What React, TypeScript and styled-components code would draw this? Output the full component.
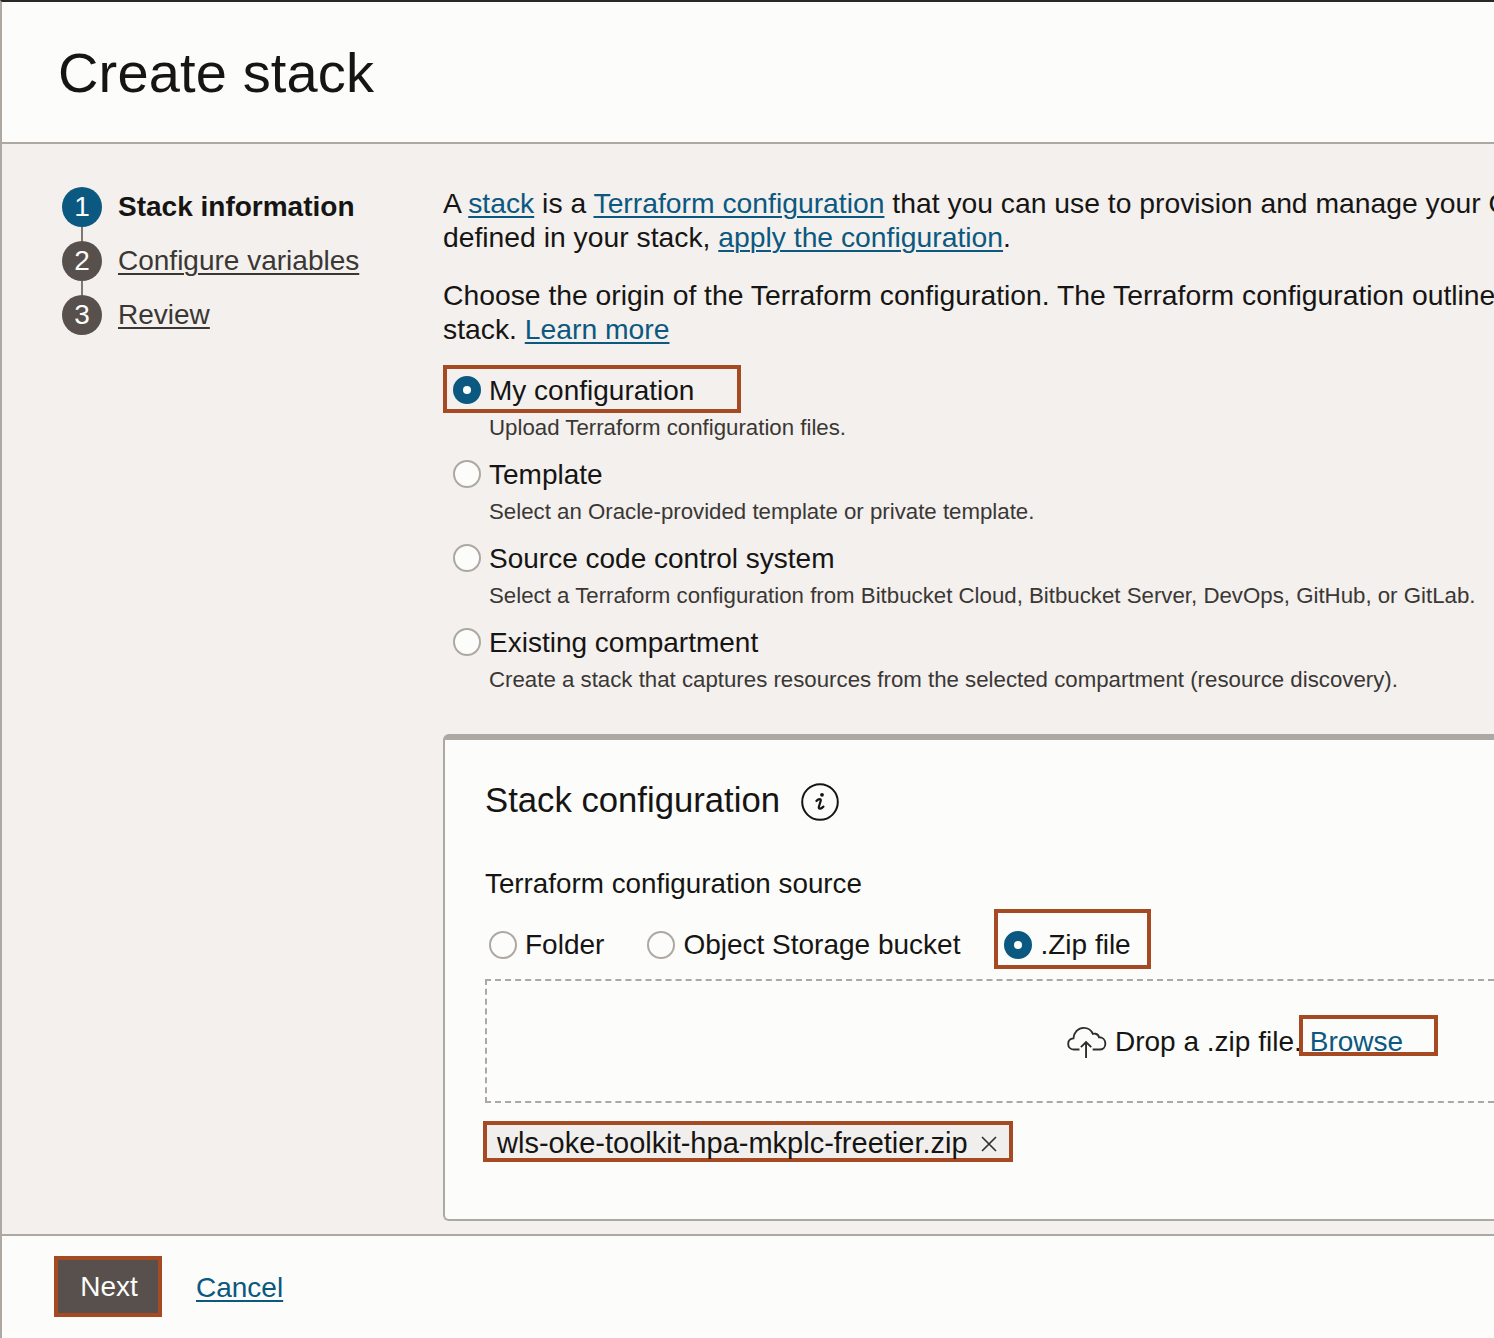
import React from 'react';
import styled, { createGlobalStyle } from 'styled-components';

const GlobalStyle = createGlobalStyle`
  html, body {
    margin: 0;
    padding: 0;
    background: #fcfcfa;
  }
  body {
    font-family: "Liberation Sans", Arial, sans-serif;
    color: #161513;
  }
`;

const Page = styled.div`
  width: 1494px;
  height: 1338px;
  box-sizing: border-box;
  display: flex;
  flex-direction: column;
  overflow: hidden;
  border-top: 2px solid #2a2826;
  border-left: 2px solid #aea8a2;
`;

const Header = styled.div`
  height: 142px;
  flex: none;
  box-sizing: border-box;
  padding: 39px 0 0 56px;
  background: #fcfcfa;
  border-bottom: 2px solid #aea8a2;
`;

const Title = styled.h1`
  margin: 0;
  font-size: 56px;
  line-height: 64px;
  font-weight: 400;
  letter-spacing: 0.15px;
`;

const Body = styled.div`
  height: 1090px;
  flex: none;
  display: flex;
  background: #f3f0ee;
  overflow: hidden;
`;

const StepsColumn = styled.div`
  width: 441px;
  flex: none;
  box-sizing: border-box;
  padding: 43px 0 0 60px;
`;

const StepRow = styled.div`
  height: 54px;
  display: flex;
  align-items: flex-start;
  gap: 16px;
`;

const StepBubble = styled.div<{ $active?: boolean; $last?: boolean }>`
  position: relative;
  width: 40px;
  height: 40px;
  border-radius: 50%;
  flex: none;
  display: flex;
  align-items: center;
  justify-content: center;
  color: #fcfcfa;
  font-size: 28px;
  background: ${(props) => (props.$active ? '#0b5880' : '#57504c')};

  &::after {
    content: '';
    display: ${(props) => (props.$last ? 'none' : 'block')};
    position: absolute;
    left: 19px;
    top: 40px;
    width: 2px;
    height: 14px;
    background: #7d7874;
  }
`;

const StepLabel = styled.span<{ $active?: boolean }>`
  font-size: 28px;
  line-height: 40px;
  color: ${(props) => (props.$active ? '#161513' : '#3a3734')};
  font-weight: ${(props) => (props.$active ? 700 : 400)};
  text-decoration: ${(props) => (props.$active ? 'none' : 'underline')};
  text-decoration-thickness: 2px;
  text-underline-offset: 3px;
`;

const Main = styled.div`
  flex: 1;
  min-width: 0;
  padding-top: 42px;
`;

const Paragraph = styled.p`
  margin: 0 0 24px;
  font-size: 28.3px;
  line-height: 34px;
  white-space: nowrap;
`;

const TextLink = styled.a`
  color: #0b5880;
  text-decoration: underline;
  text-decoration-thickness: 2px;
  text-underline-offset: 3px;
`;

const OriginList = styled.div`
  display: flex;
  flex-direction: column;
  margin-top: -5px;
`;

const Origin = styled.div`
  height: 84px;
`;

const OriginRow = styled.div<{ $marked?: boolean }>`
  width: 298px;
  height: 48px;
  box-sizing: border-box;
  display: flex;
  align-items: center;
  gap: 8px;
  padding: 2px 0 0 6px;
  border: 4px solid ${(props) => (props.$marked ? '#a54a22' : 'transparent')};
  font-size: 28px;
  white-space: nowrap;
`;

const OriginLabel = styled.span`
  margin-top: 2px;
`;

const Radio = styled.span<{ $checked?: boolean }>`
  width: 28px;
  height: 28px;
  flex: none;
  box-sizing: border-box;
  border-radius: 50%;
  background: #fcfcfa;
  border: 2px solid #aea8a2;
  display: inline-flex;
  align-items: center;
  justify-content: center;

  ${(props) =>
    props.$checked &&
    `
    background: #0b5880;
    border-color: #0b5880;
    &::after {
      content: '';
      width: 8px;
      height: 8px;
      border-radius: 50%;
      background: #fcfcfa;
    }
  `}
`;

const OriginHint = styled.div`
  padding-left: 46px;
  padding-top: 1px;
  font-size: 22.25px;
  line-height: 28px;
  color: #3a3734;
  white-space: nowrap;
`;

const Card = styled.div`
  margin-top: 33px;
  height: 487px;
  box-sizing: border-box;
  background: #fcfcfa;
  border-top: 6px solid #aea8a2;
  border-left: 2px solid #aea8a2;
  border-bottom: 2px solid #aea8a2;
  border-radius: 6px 0 0 6px;
  padding: 38px 0 0 40px;
`;

const CardHeading = styled.div`
  display: flex;
  align-items: center;
  gap: 21px;
  height: 44px;
`;

const CardTitle = styled.h2`
  margin: 0;
  font-size: 34.7px;
  font-weight: 400;
`;

const InfoWrap = styled.span`
  display: flex;
  margin-top: 4px;
`;

const FieldLabel = styled.div`
  margin-top: 45px;
  font-size: 27.8px;
  line-height: 34px;
`;

const SourceRow = styled.div`
  margin-top: 8px;
  display: flex;
  align-items: center;
  height: 60px;
`;

const SourceOption = styled.div<{ $marked?: boolean; $after?: number }>`
  height: 60px;
  box-sizing: border-box;
  display: flex;
  align-items: center;
  gap: 8px;
  font-size: 28px;
  padding: 12px 0 0 ${(props) => (props.$marked ? 6 : 0)}px;
  border: 4px solid ${(props) => (props.$marked ? '#a54a22' : 'transparent')};
  margin-right: ${(props) => props.$after ?? 0}px;
  width: ${(props) => (props.$marked ? '157px' : 'auto')};
`;

const DropZone = styled.div`
  margin-top: 10px;
  height: 124px;
  box-sizing: border-box;
  border: 2px dashed #aea8a2;
  border-right: none;
  display: flex;
  align-items: center;
  padding: 2px 0 0 580px;
  font-size: 28px;
`;

const CloudWrap = styled.span`
  display: flex;
  margin-right: 8px;
`;

const BrowseBox = styled.span`
  width: 139px;
  height: 41px;
  box-sizing: border-box;
  margin: 0 0 13px -3px;
  padding-left: 7px;
  border: 4px solid #a54a22;
  color: #0b5880;
  line-height: 45px;
  flex: none;
`;

const FileChip = styled.div`
  margin: 18px 0 0 -2px;
  width: 530px;
  height: 41px;
  box-sizing: border-box;
  border: 4px solid #a54a22;
  background: #f1efed;
  display: flex;
  align-items: center;
  padding: 4px 0 0 10px;
  gap: 12px;
  font-size: 29px;
  white-space: nowrap;
`;

const Footer = styled.div`
  flex: 1;
  background: #fcfcfa;
  border-top: 2px solid #aea8a2;
  display: flex;
  align-items: center;
  gap: 34px;
  padding: 0 0 2px 52px;
`;

const NextButton = styled.button`
  width: 108px;
  height: 61px;
  box-sizing: border-box;
  background: #57504c;
  border: 4px solid #a54a22;
  color: #fcfcfa;
  font: inherit;
  font-size: 28px;
  padding: 2px 0 0 2px;
`;

const FooterLink = styled(TextLink)`
  font-size: 28px;
  margin-top: 4px;
`;

const steps = ['Stack information', 'Configure variables', 'Review'];

const origins = [
  { label: 'My configuration', hint: 'Upload Terraform configuration files.', checked: true },
  { label: 'Template', hint: 'Select an Oracle-provided template or private template.' },
  {
    label: 'Source code control system',
    hint: 'Select a Terraform configuration from Bitbucket Cloud, Bitbucket Server, DevOps, GitHub, or GitLab.',
  },
  {
    label: 'Existing compartment',
    hint: 'Create a stack that captures resources from the selected compartment (resource discovery).',
  },
];

const InfoIcon = () => (
  <svg width="38" height="38" viewBox="0 0 38 38" fill="none" stroke="#161513">
    <circle cx="19" cy="19" r="17.8" strokeWidth="2" />
    <circle cx="21" cy="11.8" r="1.9" fill="#161513" stroke="none" />
    <path d="M15.4 18 C17 16 20.2 15.2 19.8 17.6 L17.8 24 C17.4 26.4 20 26 22.4 23.6" strokeWidth="2.2" strokeLinecap="round" />
  </svg>
);

const CloudIcon = () => (
  <svg width="40" height="32" viewBox="0 0 42 34" fill="none" stroke="#2f2d2b" strokeWidth="2">
    <path d="M13 25 H7.5 C3.5 25 1 22.3 1 19 C1 15.8 3.3 13.5 6.6 13.2 C7 7 11.5 2 17.5 2 C22 2 25.6 4.6 27.2 8.4 C28 8.1 29 8 30 8.2 C32 8.6 33.4 10 33.8 12 C37.8 12 40.5 15 40.5 18.8 C40.5 22.6 37.8 25 34.4 25 H27" />
    <path d="M20 34 V17 M14.5 22.5 L20 17 L25.5 22.5" />
  </svg>
);

const CloseIcon = () => (
  <svg width="18" height="18" viewBox="0 0 18 18" stroke="#2f2d2b" strokeWidth="1.6">
    <path d="M2 2 L16 16 M16 2 L2 16" />
  </svg>
);

const App: React.FC = () => {
  return (
    <Page>
      <GlobalStyle />
      <Header>
        <Title>Create stack</Title>
      </Header>
      <Body>
        <StepsColumn>
          {steps.map((step, index) => (
            <StepRow key={step}>
              <StepBubble $active={index === 0} $last={index === steps.length - 1}>
                {index + 1}
              </StepBubble>
              <StepLabel $active={index === 0}>{step}</StepLabel>
            </StepRow>
          ))}
        </StepsColumn>
        <Main>
          <Paragraph>
            A <TextLink>stack</TextLink> is a <TextLink>Terraform configuration</TextLink> that you can use to provision and manage your OCI resources.
            <br />
            defined in your stack, <TextLink>apply the configuration</TextLink>.
          </Paragraph>
          <Paragraph>
            Choose the origin of the Terraform configuration. The Terraform configuration outlines the resources of your
            <br />
            stack. <TextLink>Learn more</TextLink>
          </Paragraph>
          <OriginList>
            {origins.map((origin) => (
              <Origin key={origin.label}>
                <OriginRow $marked={origin.checked}>
                  <Radio $checked={origin.checked} />
                  <OriginLabel>{origin.label}</OriginLabel>
                </OriginRow>
                <OriginHint>{origin.hint}</OriginHint>
              </Origin>
            ))}
          </OriginList>
          <Card>
            <CardHeading>
              <CardTitle>Stack configuration</CardTitle>
              <InfoWrap>
                <InfoIcon />
              </InfoWrap>
            </CardHeading>
            <FieldLabel>Terraform configuration source</FieldLabel>
            <SourceRow>
              <SourceOption $after={35}>
                <Radio />
                Folder
              </SourceOption>
              <SourceOption $after={30}>
                <Radio />
                Object Storage bucket
              </SourceOption>
              <SourceOption $marked>
                <Radio $checked />
                .Zip file
              </SourceOption>
            </SourceRow>
            <DropZone>
              <CloudWrap>
                <CloudIcon />
              </CloudWrap>
              Drop a .zip file.
              <BrowseBox>Browse</BrowseBox>
            </DropZone>
            <FileChip>
              wls-oke-toolkit-hpa-mkplc-freetier.zip
              <CloseIcon />
            </FileChip>
          </Card>
        </Main>
      </Body>
      <Footer>
        <NextButton>Next</NextButton>
        <FooterLink>Cancel</FooterLink>
      </Footer>
    </Page>
  );
};

export default App;
